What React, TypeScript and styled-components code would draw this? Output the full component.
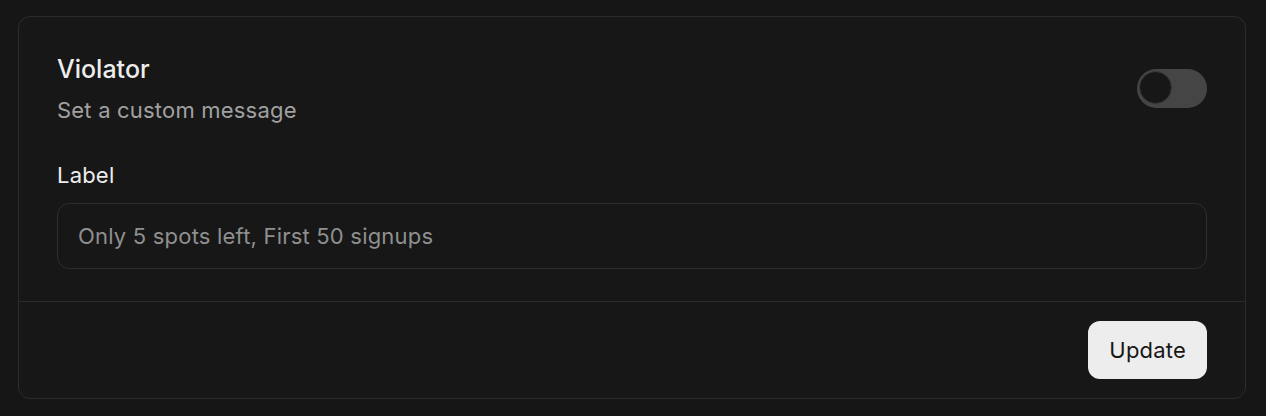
import React, { useState } from 'react';
import styled, { createGlobalStyle } from 'styled-components';

const GlobalStyle = createGlobalStyle`
  html, body {
    margin: 0;
    padding: 0;
    background: #161616;
    font-family: 'Inter', 'Noto Sans', sans-serif;
    -webkit-font-smoothing: antialiased;
  }
`;

export default function App() {
  const [enabled, setEnabled] = useState(false);

  return (
    <PAGE>
      <GlobalStyle />
      <CARD>
        <BODY>
          <HEADER>
            <HEADING>
              <TITLE>Violator</TITLE>
              <SUBTITLE>Set a custom message</SUBTITLE>
            </HEADING>
            <TOGGLE type="button" on={enabled} onClick={() => setEnabled(!enabled)}>
              <KNOB on={enabled} />
            </TOGGLE>
          </HEADER>
          <FIELD>
            <LABEL htmlFor="violator-label">Label</LABEL>
            <INPUT id="violator-label" placeholder="Only 5 spots left, First 50 signups" />
          </FIELD>
        </BODY>
        <FOOTER>
          <BUTTON type="button">Update</BUTTON>
        </FOOTER>
      </CARD>
    </PAGE>
  );
}

const PAGE = styled.div`
  padding: 16px 20px 17px 18px;
`;

const CARD = styled.section`
  border: 1px solid #2c2c2c;
  border-radius: 12px;
  background: #171717;
  overflow: hidden;
`;

const BODY = styled.div`
  padding: 36px 38px 32px 38px;
  display: flex;
  flex-direction: column;
  gap: 36px;
`;

const HEADER = styled.div`
  display: flex;
  align-items: center;
  justify-content: space-between;
`;

const HEADING = styled.div`
  display: flex;
  flex-direction: column;
  gap: 10px;
`;

const TITLE = styled.h2`
  margin: 0;
  font-size: 25px;
  line-height: 32px;
  font-weight: 500;
  color: #ededed;
`;

const SUBTITLE = styled.p`
  margin: 0;
  font-size: 22px;
  line-height: 30px;
  font-weight: 400;
  letter-spacing: 0.2px;
  color: #a1a1a1;
`;

const TOGGLE = styled.button<{ on: boolean }>`
  position: relative;
  width: 70px;
  height: 39px;
  margin-top: -2px;
  padding: 0;
  border: none;
  border-radius: 999px;
  background: ${({ on }) => (on ? '#ededed' : '#454545')};
  cursor: pointer;
`;

const KNOB = styled.span<{ on: boolean }>`
  position: absolute;
  top: 2px;
  left: ${({ on }) => (on ? '35px' : '2px')};
  width: 31px;
  height: 31px;
  border-radius: 50%;
  background: #171717;
  border: 1px solid #3a3a3a;
`;

const FIELD = styled.div`
  display: flex;
  flex-direction: column;
  gap: 14px;
`;

const LABEL = styled.label`
  font-size: 22px;
  line-height: 28px;
  font-weight: 400;
  letter-spacing: 0.2px;
  color: #ededed;
`;

const INPUT = styled.input`
  box-sizing: border-box;
  height: 66px;
  width: 100%;
  padding: 0 20px;
  border: 1px solid #2e2e2e;
  border-radius: 12px;
  background: #171717;
  color: #ededed;
  font-family: 'Inter', 'Noto Sans', sans-serif;
  font-size: 22px;
  letter-spacing: 0.2px;
  outline: none;

  &::placeholder {
    color: #8f8f8f;
  }
`;

const FOOTER = styled.footer`
  display: flex;
  justify-content: flex-end;
  padding: 19px 38px 19px 38px;
  border-top: 1px solid #2c2c2c;
`;

const BUTTON = styled.button`
  height: 58px;
  padding: 0 21px;
  border: none;
  border-radius: 12px;
  background: #ededed;
  color: #171717;
  font-family: 'Inter', 'Noto Sans', sans-serif;
  font-size: 22px;
  font-weight: 400;
  letter-spacing: 0.2px;
  cursor: pointer;
`;
